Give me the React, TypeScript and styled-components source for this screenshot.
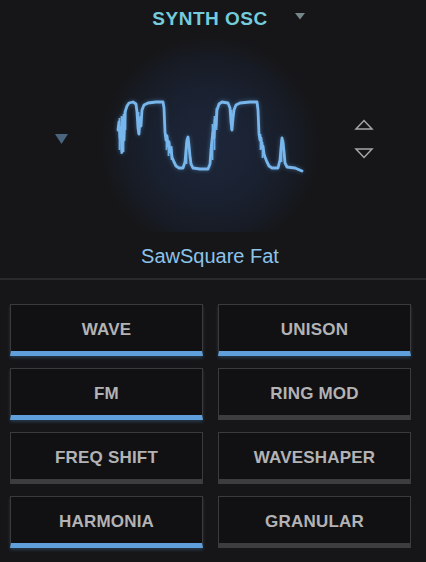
import React from 'react';
import styled, { createGlobalStyle } from 'styled-components';

const GlobalStyle = createGlobalStyle`
  html, body {
    margin: 0;
    padding: 0;
    background: #161618;
  }
  body {
    font-family: "Liberation Sans", Arial, sans-serif;
  }
`;

const Panel = styled.div`
  width: 426px;
  height: 562px;
  background: #161618;
  display: flex;
  flex-direction: column;
  overflow: hidden;
`;

const Header = styled.div`
  height: 36px;
  display: grid;
  grid-template-columns: 1fr auto 1fr;
  align-items: center;
  padding-right: 6px;
`;

const Title = styled.div`
  grid-column: 2;
  font-size: 19px;
  font-weight: 700;
  letter-spacing: 0.5px;
  color: #74cbdc;
  padding-top: 2px;
`;

const HeaderCaret = styled.div`
  grid-column: 3;
  padding-left: 27px;
  display: flex;
  align-items: center;
  padding-bottom: 3px;
`;

const Display = styled.div`
  height: 242px;
  display: flex;
  flex-direction: column;
`;

const ScopeRow = styled.div`
  height: 196px;
  display: grid;
  grid-template-columns: 100px 220px 1fr;
`;

const SideLeft = styled.div`
  display: flex;
  align-items: center;
  padding-left: 55px;
  padding-top: 9px;
`;

const Scope = styled.div`
  background: radial-gradient(
    circle 110px at 50% 56%,
    #1d2639 0%,
    #1a2232 45%,
    #171b24 80%,
    #161618 100%
  );
  display: flex;
`;

const Wave = styled.svg`
  width: 220px;
  height: 196px;
  filter: drop-shadow(0 0 2px rgba(100, 170, 235, 0.45));
`;

const SideRight = styled.div`
  display: flex;
  flex-direction: column;
  justify-content: center;
  gap: 18px;
  padding-left: 34px;
  padding-top: 9px;
`;

const PresetName = styled.div`
  text-align: center;
  font-size: 20px;
  color: #8cc3ea;
  line-height: 24px;
  padding-top: 12px;
  padding-right: 6px;
`;

const Divider = styled.div`
  height: 2px;
  background: #2a2a2d;
`;

const Grid = styled.div`
  display: grid;
  grid-template-columns: 193px 193px;
  grid-auto-rows: 52px;
  column-gap: 15px;
  row-gap: 12px;
  padding: 24px 15px 0 10px;
`;

const ModuleButton = styled.div<{ $active: boolean }>`
  background: #111113;
  border: 1px solid #3b3b3e;
  border-bottom: 5px solid ${(p) => (p.$active ? '#5f9fdb' : '#3d3d40')};
  box-shadow: ${(p) => (p.$active ? '0 2px 3px rgba(95, 159, 219, 0.25)' : 'none')};
  display: flex;
  align-items: center;
  justify-content: center;
  padding-top: 3px;
  font-size: 17px;
  font-weight: 700;
  color: #b3b3b5;
  letter-spacing: 0.2px;
`;

const wavePath =
  'M118,130 L119,122 L120,138 L121,128 L122,152 L123,118 L124,140 L125,112 L127,106 L129,103 L133,102 L136,104 L137,112 L138,128 L139,134 L140,118 L141,126 L142,110 L144,105 L148,103 L156,102 L163,102 L164,108 L165,132 L166,140 L167,136 L168,146 L169,142 L170,152 L171,148 L172,157 L174,162 L176,166 L179,168 L183,168 L185,162 L186,150 L187,140 L188,137 L189,146 L190,156 L191,164 L193,168 L200,169 L208,169 L210,164 L211,150 L212,140 L213,132 L214,138 L215,120 L216,126 L217,110 L219,104 L222,102 L228,103 L230,108 L231,122 L232,130 L233,118 L234,110 L236,105 L240,103 L250,102 L257,102 L258,110 L259,134 L260,140 L261,138 L262,148 L263,146 L264,154 L265,157 L267,162 L269,166 L272,168 L278,168 L280,160 L281,148 L282,138 L283,142 L284,152 L285,163 L287,167 L295,168 L302,171';

const streaks = [
  'M119.5,150 L119.5,118',
  'M121.5,116 L121.5,154',
  'M123.5,152 L123.5,114',
  'M125.5,130 L125.5,110',
  'M138.5,112 L138.5,134',
  'M166.5,134 L166.5,150',
  'M168.5,140 L168.5,156',
  'M171.5,146 L171.5,160',
  'M186.5,164 L186.5,142',
  'M212.5,160 L212.5,124',
  'M214.5,150 L214.5,116',
  'M216.5,130 L216.5,108',
  'M231.5,110 L231.5,130',
  'M260.5,134 L260.5,150',
  'M262.5,142 L262.5,158',
  'M281.5,162 L281.5,140',
];

const modules = [
  { name: 'WAVE', active: true },
  { name: 'UNISON', active: true },
  { name: 'FM', active: true },
  { name: 'RING MOD', active: false },
  { name: 'FREQ SHIFT', active: false },
  { name: 'WAVESHAPER', active: false },
  { name: 'HARMONIA', active: true },
  { name: 'GRANULAR', active: false },
];

const App: React.FC = () => {
  return (
    <>
      <GlobalStyle />
      <Panel>
        <Header>
          <Title>SYNTH OSC</Title>
          <HeaderCaret>
            <svg width="10" height="7" viewBox="0 0 10 7">
              <polygon points="0,0 10,0 5,6.5" fill="#75878a" />
            </svg>
          </HeaderCaret>
        </Header>
        <Display>
          <ScopeRow>
            <SideLeft>
              <svg width="13" height="10" viewBox="0 0 13 10">
                <polygon points="0,0 13,0 6.5,10" fill="#4a6580" />
              </svg>
            </SideLeft>
            <Scope>
              <Wave viewBox="100 36 220 196">
                {streaks.map((d) => (
                  <path key={d} d={d} stroke="#6fb0e8" strokeWidth="1.8" fill="none" />
                ))}
                <path
                  d={wavePath}
                  stroke="#78b6ec"
                  strokeWidth="2.8"
                  strokeLinejoin="round"
                  strokeLinecap="round"
                  fill="none"
                />
              </Wave>
            </Scope>
            <SideRight>
              <svg width="20" height="11" viewBox="0 0 20 11">
                <polygon points="2,10 18,10 10,1.5" fill="none" stroke="#a6a6a8" strokeWidth="1.5" />
              </svg>
              <svg width="20" height="11" viewBox="0 0 20 11">
                <polygon points="2,1 18,1 10,9.5" fill="none" stroke="#a6a6a8" strokeWidth="1.5" />
              </svg>
            </SideRight>
          </ScopeRow>
          <PresetName>SawSquare Fat</PresetName>
        </Display>
        <Divider />
        <Grid>
          {modules.map((m) => (
            <ModuleButton key={m.name} $active={m.active}>
              {m.name}
            </ModuleButton>
          ))}
        </Grid>
      </Panel>
    </>
  );
};

export default App;
